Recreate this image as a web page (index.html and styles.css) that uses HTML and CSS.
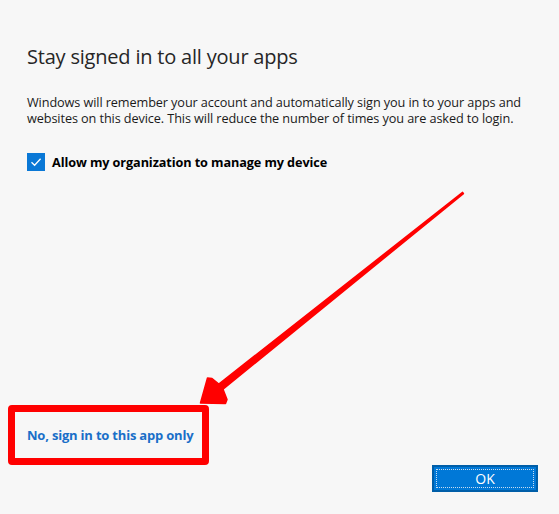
FILE: index.html
```html
<!DOCTYPE html>
<html>
<head>
<meta charset="utf-8">
<link rel="stylesheet" href="styles.css">
</head>
<body>
<div class="dialog">
  <h1 class="title">Stay signed in to all your apps</h1>
  <p class="desc">Windows will remember your account and automatically sign you in to your apps and websites on this device. This will reduce the number of times you are asked to login.</p>
  <label class="check">
    <span class="box"><svg viewBox="0 0 18 18" width="18" height="18"><path d="M4.5 9.2 L7.6 12.2 L13.6 5.8" fill="none" stroke="#fff" stroke-width="1.3"/></svg></span>
    <span class="check-label">Allow my organization to manage my device</span>
  </label>
  <div class="footer">
    <div class="annot-box"><a class="link" href="#">No, sign in to this app only</a></div>
    <div class="actions"><button class="ok">OK</button></div>
  </div>
</div>
<svg class="arrow" width="559" height="514" viewBox="0 0 559 514">
  <polygon points="200.5,403 207.5,378 212,378.5 218.8,384 462.6,192.4 463.4,193.6 223,389.2 227,399.5 225.5,403.5" fill="#ff0000" stroke="#ff0000" stroke-width="1.5" stroke-linejoin="round"/>
</svg>
</body>
</html>
```

FILE: styles.css
```css
html, body {
  margin: 0;
  padding: 0;
  background: #f7f7f7;
}
body {
  width: 559px;
  height: 514px;
  position: relative;
  overflow: hidden;
  font-family: "Open Sans", "Noto Sans", sans-serif;
}
.dialog {
  box-sizing: border-box;
  height: 514px;
  display: flex;
  flex-direction: column;
  padding: 42px 21px 22px 27px;
}
.title {
  margin: 0;
  font-size: 20px;
  font-weight: 400;
  line-height: 30px;
  color: #262626;
  letter-spacing: -0.2px;
}
.desc {
  margin: 22px 0 0;
  font-size: 12.7px;
  line-height: 16px;
  color: #1a1a1a;
  letter-spacing: -0.1px;
}
.check {
  margin-top: 27px;
  display: flex;
  align-items: center;
  gap: 7px;
}
.box {
  width: 18px;
  height: 18px;
  background: #0a78d6;
  display: block;
}
.box svg { display: block; }
.check-label {
  font-size: 12.7px;
  font-weight: 700;
  color: #000;
  letter-spacing: -0.1px;
}
.footer {
  margin-top: auto;
  display: flex;
  flex-direction: column;
}
.annot-box {
  align-self: flex-start;
  margin-left: -19px;
  width: 175px;
  height: 46px;
  border: 7px solid #ff0000;
  border-radius: 4px;
  display: flex;
  align-items: center;
  padding-left: 12px;
  box-sizing: content-box;
  background: #f7f7f7;
}
.link {
  font-size: 13px;
  font-weight: 700;
  color: #1a6fc8;
  text-decoration: none;
  letter-spacing: -0.2px;
}
.actions {
  display: flex;
  justify-content: flex-end;
}
.ok {
  width: 106px;
  height: 27px;
  background: #0078d7;
  border: 2px solid #005ea8;
  outline: 1px dotted #c8dcf0;
  outline-offset: -5px;
  color: #ffffff;
  font-family: "Open Sans", "Noto Sans", sans-serif;
  font-size: 14px;
  padding: 0;
}
.arrow {
  position: absolute;
  left: 0;
  top: 0;
  pointer-events: none;
}
```
